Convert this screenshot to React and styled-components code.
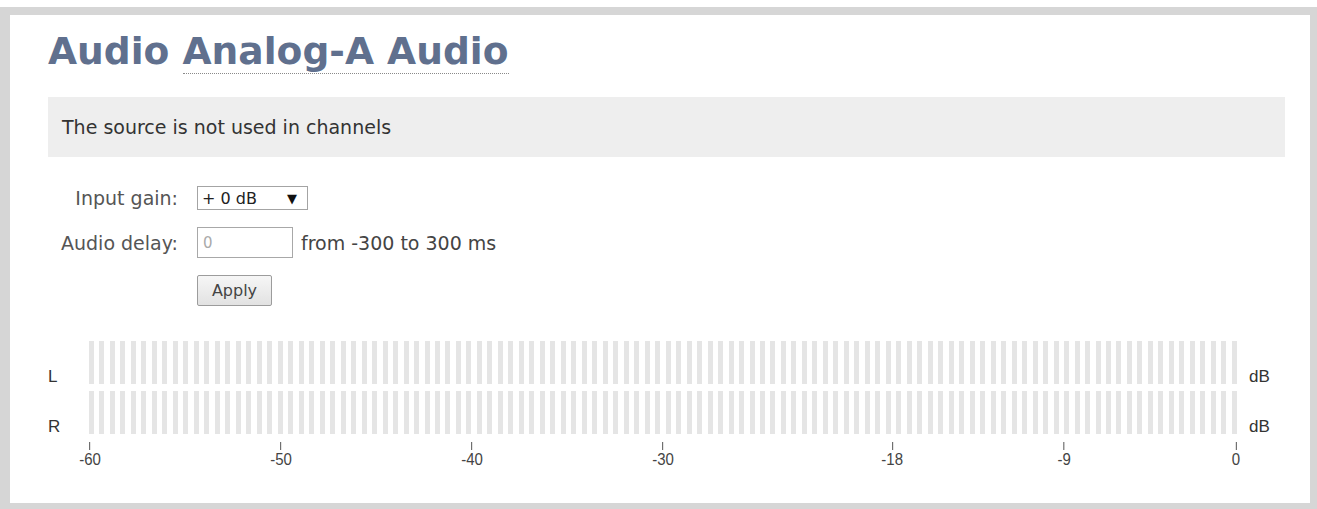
import React from 'react';
import styled, { createGlobalStyle } from 'styled-components';

const GlobalStyle = createGlobalStyle`
  html, body {
    margin: 0;
    padding: 0;
    background: #fff;
  }
  body {
    padding-top: 7px;
    font-family: "DejaVu Sans", Verdana, sans-serif;
  }
`;

const Panel = styled.div`
  box-sizing: border-box;
  height: 502px;
  border-style: solid;
  border-color: #d6d6d6;
  border-width: 8px 7px 6px 10px;
  padding: 18px 25px 0 38px;
  background: #fff;
`;

const Title = styled.h1`
  margin: 0;
  font-family: "DejaVu Sans", Verdana, sans-serif;
  font-weight: bold;
  font-size: 37.6px;
  line-height: 37px;
  color: #60708e;
`;

const Dotted = styled.span`
  border-bottom: 1px dotted #8a8a8a;
`;

const Notice = styled.div`
  margin-top: 27px;
  height: 60px;
  line-height: 60px;
  padding-left: 14px;
  background: #eeeeee;
  font-size: 19px;
  color: #333;
`;

const Form = styled.div`
  margin-top: 29px;
  display: grid;
  grid-template-columns: 130px auto;
  column-gap: 19px;
  row-gap: 17px;
  align-items: center;
  justify-content: start;
`;

const Label = styled.div`
  text-align: right;
  font-size: 19px;
  color: #555;
`;

const Controls = styled.div`
  display: flex;
  align-items: center;
  gap: 8px;
  font-size: 19px;
  color: #444;
`;

const Select = styled.div`
  box-sizing: border-box;
  width: 111px;
  height: 24px;
  border: 1px solid #a4a4a4;
  background: #fff;
  display: flex;
  align-items: center;
  justify-content: space-between;
  padding: 0 10px 0 4px;
  font-size: 16px;
  color: #222;
`;

const Arrow = styled.span`
  font-size: 13px;
  color: #111;
`;

const Input = styled.div`
  box-sizing: border-box;
  width: 96px;
  height: 31px;
  border: 1px solid #a8a8a8;
  background: #fff;
  padding-left: 5px;
  display: flex;
  align-items: center;
  font-size: 15px;
  color: #aaa;
`;

const Button = styled.button`
  box-sizing: border-box;
  width: 75px;
  height: 31px;
  border: 1px solid #9c9c9c;
  border-radius: 2px;
  background: linear-gradient(#f6f6f6, #e2e2e2);
  font-family: "DejaVu Sans", Verdana, sans-serif;
  font-size: 16px;
  color: #444;
  padding: 0;
`;

const Meter = styled.div`
  margin-top: 35px;
  display: grid;
  grid-template-columns: 41px 1149px auto;
  grid-template-rows: 43px 43px auto;
  row-gap: 7px;
  align-items: center;
  font-family: "Liberation Sans", Arial, sans-serif;
  font-size: 17px;
  color: #333;
`;

const Side = styled.div`
  align-self: end;
  line-height: 14px;
  padding-left: ${(p) => p.$pad || 0}px;
`;

const Bars = styled.div`
  height: 43px;
  display: flex;
  justify-content: space-between;
`;

const Bar = styled.div`
  width: 5px;
  height: 100%;
  background: #e5e5e5;
`;

const Scale = styled.div`
  grid-column: 2;
  position: relative;
  height: 27px;
  margin: 1px 2px 0 1px;
`;

const Tick = styled.div`
  position: absolute;
  top: 0;
  transform: translateX(-50%);
  display: flex;
  flex-direction: column;
  align-items: center;
  font-family: "Liberation Sans", Arial, sans-serif;
  font-size: 15px;
  line-height: 16px;
  color: #444;
`;

const TickMark = styled.div`
  width: 1px;
  height: 8px;
  background: #555;
  margin-bottom: 1px;
`;

const TickLabel = styled.span`
  display: inline-block;
  transform: scaleY(1.15);
`;

const bars = Array.from({ length: 110 });
const ticks = [-60, -50, -40, -30, -18, -9, 0];

const BarRow = () => (
  <Bars>
    {bars.map((_, i) => (
      <Bar key={i} />
    ))}
  </Bars>
);

export default function App() {
  return (
    <>
      <GlobalStyle />
      <Panel>
        <Title>
          Audio <Dotted>Analog-A Audio</Dotted>
        </Title>
        <Notice>The source is not used in channels</Notice>
        <Form>
          <Label>Input gain:</Label>
          <Controls>
            <Select>
              <span>+ 0 dB</span>
              <Arrow>▼</Arrow>
            </Select>
          </Controls>
          <Label>Audio delay:</Label>
          <Controls>
            <Input>0</Input>
            <span>from -300 to 300 ms</span>
          </Controls>
          <div />
          <Controls>
            <Button>Apply</Button>
          </Controls>
        </Form>
        <Meter>
          <Side>L</Side>
          <BarRow />
          <Side $pad={11}>dB</Side>
          <Side>R</Side>
          <BarRow />
          <Side $pad={11}>dB</Side>
          <Scale>
            {ticks.map((db) => (
              <Tick key={db} style={{ left: `${((db + 60) / 60) * 100}%` }}>
                <TickMark />
                <TickLabel>{db}</TickLabel>
              </Tick>
            ))}
          </Scale>
        </Meter>
      </Panel>
    </>
  );
}
